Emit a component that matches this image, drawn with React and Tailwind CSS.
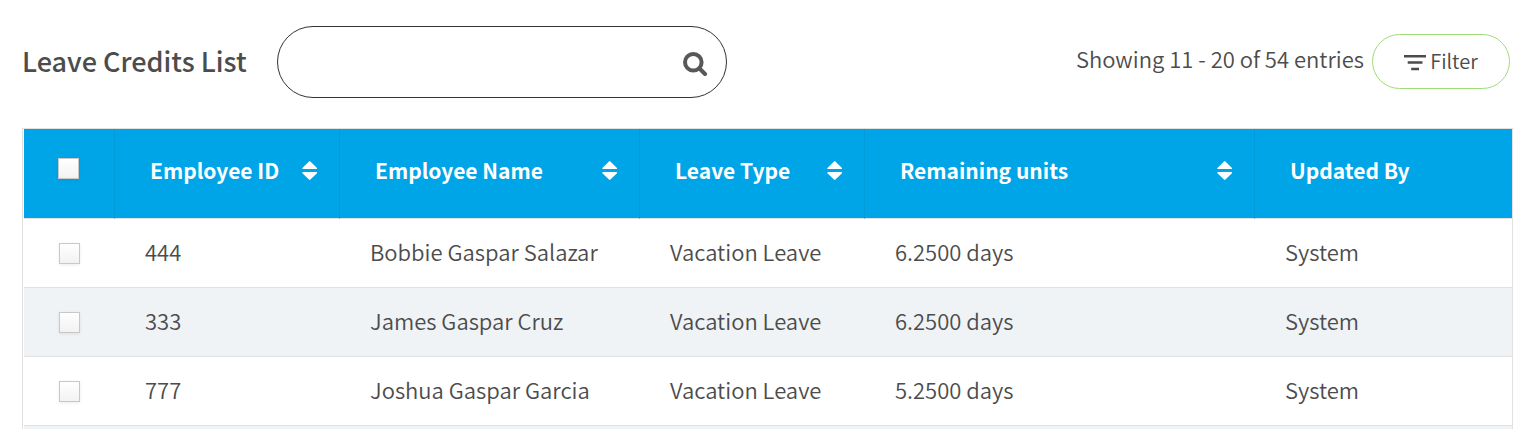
const columns = [
  { label: "Employee ID", sortable: true },
  { label: "Employee Name", sortable: true },
  { label: "Leave Type", sortable: true },
  { label: "Remaining units", sortable: true },
  { label: "Updated By", sortable: false },
];

const rows = [
  ["444", "Bobbie Gaspar Salazar", "Vacation Leave", "6.2500 days", "System"],
  ["333", "James Gaspar Cruz", "Vacation Leave", "6.2500 days", "System"],
  ["777", "Joshua Gaspar Garcia", "Vacation Leave", "5.2500 days", "System"],
];

function SearchIcon() {
  return (
    <svg width="26" height="28" viewBox="0 0 26 28" fill="none" stroke="#57585a" aria-hidden="true">
      <circle cx="11.3" cy="14.2" r="8.3" strokeWidth="4" />
      <path d="M18 21L23 26" strokeWidth="4" strokeLinecap="round" />
    </svg>
  );
}

function FilterIcon() {
  return (
    <svg width="22" height="16" viewBox="0 0 22 16" fill="#4c4c4c" aria-hidden="true">
      <path d="M0 0h22v2.5H0zM3.7 6.2h14.8v2.6H3.7zM7.2 12.8h7.8v2.5H7.2z" />
    </svg>
  );
}

function SortIcon() {
  return (
    <svg width="16" height="20" viewBox="0 0 16 20" fill="currentColor" aria-hidden="true">
      <path d="M7 1.4Q7.7.8 8.4 1.4L15 8Q15.3 9.1 14.3 9.1H1.1Q0 9.1.4 8zM1.1 12.1H14.3Q15.3 12.1 15 13.3L8.4 19.6Q7.7 20.2 7 19.6L.4 13.3Q0 12.1 1.1 12.1z" />
    </svg>
  );
}

function Checkbox({ label }) {
  return (
    <input
      type="checkbox"
      aria-label={label}
      className="block size-[21px] appearance-none border border-[#c8c8c8] bg-linear-to-b from-white to-[#f2f2f2] shadow-[0_1px_3px_rgba(0,0,0,0.08)] checked:from-[#00a5e7] checked:to-[#00a5e7]"
    />
  );
}

export default function App() {
  return (
    <div className="h-screen overflow-hidden bg-white font-['Noto_Sans_CJK_SC','Noto_Sans',sans-serif] text-[#4c4c4c]">
      <header className="flex items-center pt-[26px] pr-[30px] pb-[30px] pl-[22px]">
        <h1 className="mr-[30px] pb-0.5 text-[27px] leading-9 font-medium whitespace-nowrap">Leave Credits List</h1>
        <form
          role="search"
          className="flex h-[72px] w-[450px] items-center rounded-full border border-[#333333] pr-[18px] pl-8"
          onSubmit={(e) => e.preventDefault()}
        >
          <input type="search" aria-label="Search leave credits" className="min-w-0 flex-1 text-[22px] outline-none" />
          <button type="submit" aria-label="Search">
            <SearchIcon />
          </button>
        </form>
        <p className="mr-2 ml-auto pb-2 text-[22px] leading-8 font-[350] whitespace-nowrap">
          Showing 11 - 20 of 54 entries
        </p>
        <div className="pb-0.5">
          <button
            type="button"
            className="flex h-[55px] w-[138px] items-center justify-center gap-1 rounded-full border border-[#a0dc78] text-[20px] leading-7 font-[350]"
          >
            <span className="pt-1">
              <FilterIcon />
            </span>
            Filter
          </button>
        </div>
      </header>

      <div className="mr-[27px] ml-[22px] border border-[#e1e1e1] pl-px">
        <table className="w-full table-fixed border-separate border-spacing-0 text-left">
          <colgroup>
            <col className="w-[91px]" />
            <col className="w-[225px]" />
            <col className="w-[300px]" />
            <col className="w-[225px]" />
            <col className="w-[390px]" />
            <col />
          </colgroup>
          <thead className="bg-[#00a5e7] text-white">
            <tr className="h-[90px]">
              <th className="border-r border-b border-r-[#009bd9] border-b-[#e1e1e1] pt-0 pb-2.5 pl-[34px]">
                <Checkbox label="Select all employees" />
              </th>
              {columns.map((column) => (
                <th
                  key={column.label}
                  className="border-r border-b border-r-[#009bd9] border-b-[#e1e1e1] px-0 pt-0 pb-2 text-[21px] leading-8 font-bold last:border-r-0"
                >
                  {column.sortable ? (
                    <button type="button" className="flex w-full items-center justify-between pr-[21px] pl-[35px]">
                      {column.label}
                      <SortIcon />
                    </button>
                  ) : (
                    <span className="block pl-[35px]">{column.label}</span>
                  )}
                </th>
              ))}
            </tr>
          </thead>
          <tbody>
            {rows.map((row) => (
              <tr key={row[0]} className="h-[69px] even:bg-[#eff3f6]">
                <td className="border-b border-[#e1e1e1] py-0 pl-[35px]">
                  <Checkbox label={`Select ${row[1]}`} />
                </td>
                {row.map((cell, i) => (
                  <td
                    key={i}
                    className="border-b border-[#e1e1e1] pt-0 pb-1 pl-[30px] text-[22px] leading-8 font-[350] whitespace-nowrap"
                  >
                    {cell}
                  </td>
                ))}
              </tr>
            ))}
            <tr className="h-[69px] bg-[#eff3f6]">
              <td colSpan={6} />
            </tr>
          </tbody>
        </table>
      </div>
    </div>
  );
}
